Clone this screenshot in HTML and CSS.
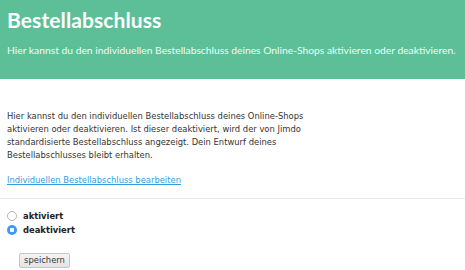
FILE: index.html
```html
<!DOCTYPE html>
<html lang="de">
<head>
<meta charset="utf-8">
<title>Bestellabschluss</title>
<link rel="stylesheet" href="styles.css">
</head>
<body>
<header class="hero">
  <h1 class="hero-title">Bestellabschluss</h1>
  <p class="hero-sub">Hier kannst du den individuellen Bestellabschluss deines Online-Shops aktivieren oder deaktivieren.</p>
</header>
<main class="content">
  <section class="intro">
    <p class="intro-text">Hier kannst du den individuellen Bestellabschluss deines Online-Shops<br>aktivieren oder deaktivieren. Ist dieser deaktiviert, wird der von Jimdo<br>standardisierte Bestellabschluss angezeigt. Dein Entwurf deines<br>Bestellabschlusses bleibt erhalten.</p>
    <p class="intro-link"><a href="#">Individuellen Bestellabschluss bearbeiten</a></p>
  </section>
  <form class="settings">
    <label class="option"><input class="radio" type="radio" name="state"><span>aktiviert</span></label>
    <label class="option"><input class="radio" type="radio" name="state" checked><span>deaktiviert</span></label>
    <div class="actions"><button type="button" class="btn">speichern</button></div>
  </form>
</main>
</body>
</html>
```
FILE: styles.css
```css
* { box-sizing: border-box; }
html, body { margin: 0; padding: 0; background: #fff; }
body { font-family: "DejaVu Sans", "Liberation Sans", sans-serif; color: #333; }

.hero {
  background: #5cbf98;
  height: 79px;
  padding: 8px 7px 0;
  color: #fff;
}
.hero-title {
  margin: 0;
  font: 700 21px/24px "Lato", sans-serif;
  letter-spacing: 0.1px;
}
.hero-sub {
  margin: 11px 0 0;
  font: 400 10.3px/14px "Lato", sans-serif;
  color: #f2faf6;
  white-space: nowrap;
}

.intro {
  padding: 31px 7px 0;
  font-size: 8.4px;
  line-height: 13px;
}
.intro-text { margin: 0; color: #333; }
.intro-link { margin: 12px 0 0; }
.intro-link a { color: #2f9ee0; text-decoration: underline; }

.settings {
  margin-top: 11px;
  border-top: 1px solid #e8e8e8;
  padding: 10px 7px 0;
}
.option {
  display: flex;
  align-items: center;
  height: 14px;
  font-size: 8.4px;
  font-weight: 700;
  color: #222;
}
.radio {
  -webkit-appearance: none;
  appearance: none;
  width: 10px;
  height: 10px;
  margin: 0 6px 0 0;
  border-radius: 50%;
  border: 1px solid #b5b5b5;
  background: #fff;
  position: relative;
  top: -0.5px;
}
.radio:checked {
  border: none;
  background: radial-gradient(circle, #fff 0 2px, #3b99fc 2.5px);
}
.actions { margin-top: 11px; padding-left: 12px; }
.btn {
  width: 51px;
  height: 15px;
  padding: 0;
  border: 1px solid #c6c6c6;
  border-radius: 2px;
  background: linear-gradient(#f4f4f4, #e4e4e4);
  font: 400 8.4px "DejaVu Sans", sans-serif;
  color: #333;
}
```
